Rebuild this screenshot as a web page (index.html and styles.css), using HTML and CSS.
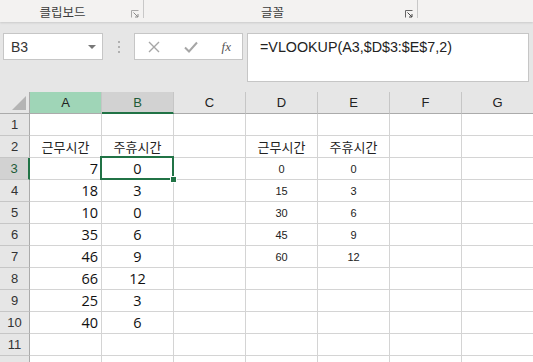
FILE: index.html
```html
<!DOCTYPE html>
<html lang="ko">
<head>
<meta charset="utf-8">
<link rel="stylesheet" href="styles.css">
</head>
<body>
<div class="ribbon">
  <div class="group g1"><span class="glabel">클립보드</span><svg class="launch" width="8" height="8" viewBox="0 0 8 8"><path d="M0.5 7.5V0.5H7.5" fill="none" stroke="#a8a8a8"/><path d="M2.5 2.5L7 7M7 4V7H4" fill="none" stroke="#8a8a8a"/></svg></div>
  <div class="group g2"><span class="glabel">글꼴</span><svg class="launch" width="8" height="8" viewBox="0 0 8 8"><path d="M0.5 7.5V0.5H7.5" fill="none" stroke="#666"/><path d="M2.5 2.5L7 7M7 4V7H4" fill="none" stroke="#444"/></svg></div>
  <div class="group g3"></div>
</div>
<div class="fbar">
  <div class="namebox"><span>B3</span><span class="caret"></span></div>
  <div class="dots"><i></i><i></i><i></i></div>
  <div class="btns">
    <svg width="14" height="14" viewBox="0 0 14 14"><path d="M2 2L12 12M12 2L2 12" stroke="#a6a6a6" stroke-width="1.4"/></svg>
    <svg width="16" height="14" viewBox="0 0 16 14"><path d="M2 7.5L6 11.5L14 2.5" fill="none" stroke="#a6a6a6" stroke-width="2"/></svg>
    <span class="fx">fx</span>
  </div>
  <div class="formula">=VLOOKUP(A3,$D$3:$E$7,2)</div>
</div>
<div class="sheet">
  <div class="corner"><span class="tri"></span></div>
  <div class="ch hl">A</div><div class="ch sel">B</div><div class="ch">C</div><div class="ch">D</div><div class="ch">E</div><div class="ch">F</div><div class="ch">G</div>

  <div class="rh">1</div><div class="c"></div><div class="c"></div><div class="c"></div><div class="c"></div><div class="c"></div><div class="c"></div><div class="c"></div>

  <div class="rh">2</div><div class="c k">근무시간</div><div class="c k">주휴시간</div><div class="c"></div><div class="c k">근무시간</div><div class="c k">주휴시간</div><div class="c"></div><div class="c"></div>

  <div class="rh rsel">3</div><div class="c n">7</div><div class="c m active">0<span class="box"></span><span class="handle"></span></div><div class="c"></div><div class="c s">0</div><div class="c s">0</div><div class="c"></div><div class="c"></div>

  <div class="rh">4</div><div class="c n">18</div><div class="c m">3</div><div class="c"></div><div class="c s">15</div><div class="c s">3</div><div class="c"></div><div class="c"></div>

  <div class="rh">5</div><div class="c n">10</div><div class="c m">0</div><div class="c"></div><div class="c s">30</div><div class="c s">6</div><div class="c"></div><div class="c"></div>

  <div class="rh">6</div><div class="c n">35</div><div class="c m">6</div><div class="c"></div><div class="c s">45</div><div class="c s">9</div><div class="c"></div><div class="c"></div>

  <div class="rh">7</div><div class="c n">46</div><div class="c m">9</div><div class="c"></div><div class="c s">60</div><div class="c s">12</div><div class="c"></div><div class="c"></div>

  <div class="rh">8</div><div class="c n">66</div><div class="c m">12</div><div class="c"></div><div class="c"></div><div class="c"></div><div class="c"></div><div class="c"></div>

  <div class="rh">9</div><div class="c n">25</div><div class="c m">3</div><div class="c"></div><div class="c"></div><div class="c"></div><div class="c"></div><div class="c"></div>

  <div class="rh">10</div><div class="c n">40</div><div class="c m">6</div><div class="c"></div><div class="c"></div><div class="c"></div><div class="c"></div><div class="c"></div>

  <div class="rh">11</div><div class="c"></div><div class="c"></div><div class="c"></div><div class="c"></div><div class="c"></div><div class="c"></div><div class="c"></div>

  <div class="rh"></div><div class="c"></div><div class="c"></div><div class="c"></div><div class="c"></div><div class="c"></div><div class="c"></div><div class="c"></div>
</div>
</body>
</html>
```
FILE: styles.css
```css
html, body {
  margin: 0;
  padding: 0;
}
body {
  width: 533px;
  height: 362px;
  overflow: hidden;
  background: #e6e6e6;
  font-family: "Liberation Sans", "Noto Sans CJK KR", sans-serif;
  color: #222;
}
.ribbon {
  height: 22px;
  background: #f3f2f1;
  display: flex;
  box-shadow: 0 1px 2px rgba(0,0,0,0.12);
  position: relative;
}
.group {
  position: relative;
  display: flex;
  align-items: flex-end;
  height: 18px;
  border-right: 1px solid #c8c8c8;
}
.g1 { width: 143px; }
.g2 { width: 273px; }
.g3 { border-right: none; flex: 1; }
.glabel {
  flex: 1;
  text-align: center;
  font-family: "Noto Sans CJK KR", sans-serif;
  font-size: 12.5px;
  line-height: 14px;
  color: #3c3c3c;
  padding-right: 16px;
  margin-bottom: -1px;
}
.g1 .glabel { padding-right: 18px; }
.launch {
  position: absolute;
  right: 4px;
  top: 10px;
}
.fbar {
  display: flex;
  align-items: flex-start;
  padding: 11px 4px 0 3px;
  height: 49px;
}
.namebox {
  background: #fff;
  border: 1px solid #c6c6c6;
  display: flex;
  align-items: center;
  justify-content: space-between;
  padding: 0 6px 0 7px;
  font-size: 14px;
  color: #333;
  box-sizing: border-box;
  width: 100px;
  height: 27px;
}
.caret {
  width: 0;
  height: 0;
  border-left: 4px solid transparent;
  border-right: 4px solid transparent;
  border-top: 4px solid #777;
}
.dots {
  width: 31px;
  height: 27px;
  display: flex;
  flex-direction: column;
  align-items: center;
  justify-content: center;
  gap: 3px;
}
.dots i {
  width: 2px;
  height: 2px;
  background: #b0b0b0;
}
.btns {
  width: 109px;
  height: 27px;
  box-sizing: border-box;
  background: #fff;
  border: 1px solid #c6c6c6;
  display: flex;
  align-items: center;
  justify-content: space-between;
  padding: 0 11px 0 12px;
}
.fx {
  font-family: "Liberation Serif", serif;
  font-style: italic;
  font-size: 13px;
  color: #555;
}
.formula {
  flex: 1;
  margin-left: 4px;
  height: 49px;
  box-sizing: border-box;
  background: #fff;
  border: 1px solid #c6c6c6;
  padding: 3px 0 0 12px;
  font-size: 14.3px;
  line-height: 20px;
  color: #222;
}
.sheet {
  margin-top: 10px;
  display: grid;
  grid-template-columns: 30px repeat(7, 72px);
  grid-auto-rows: 22px;
  background: #fff;
}
.corner, .ch, .rh {
  background: #e6e6e6;
  box-sizing: border-box;
}
.corner {
  position: relative;
  border-right: 1px solid #ababab;
  border-bottom: 1px solid #ababab;
}
.tri {
  position: absolute;
  right: 3px;
  bottom: 3px;
  width: 0;
  height: 0;
  border-left: 14px solid transparent;
  border-bottom: 14px solid #b4b4b4;
}
.ch {
  border-right: 1px solid #c6c6c6;
  border-bottom: 1px solid #ababab;
  display: flex;
  align-items: center;
  justify-content: center;
  font-size: 13px;
  color: #222;
}
.ch.hl {
  background: #9fd5b7;
}
.ch.sel {
  background: #d2d2d2;
  border-bottom: 2px solid #217346;
  color: #1f5c38;
}
.rh {
  border-right: 1px solid #ababab;
  border-bottom: 1px solid #c6c6c6;
  display: flex;
  align-items: center;
  justify-content: center;
  font-size: 13px;
  color: #333;
}
.rh.rsel {
  background: #d2d2d2;
  border-right: 2px solid #217346;
  color: #1f5c38;
}
.c {
  box-sizing: border-box;
  border-right: 1px solid #d4d4d4;
  border-bottom: 1px solid #d4d4d4;
  display: flex;
  align-items: center;
  justify-content: center;
  font-family: "Open Sans", "Liberation Sans", sans-serif;
  font-size: 14.5px;
  color: #111;
  position: relative;
}
.c.n {
  justify-content: flex-end;
  padding-right: 3px;
}
.c.k {
  font-family: "Noto Sans CJK KR", sans-serif;
  font-size: 13px;
  color: #222;
}
.c.s {
  font-family: "Liberation Sans", sans-serif;
  font-size: 11px;
  color: #222;
}
.box {
  position: absolute;
  left: -2px;
  top: -2px;
  right: -1px;
  bottom: -1px;
  border: 2px solid #217346;
}
.handle {
  position: absolute;
  right: -4px;
  bottom: -4px;
  width: 5px;
  height: 5px;
  background: #217346;
  border: 1px solid #fff;
  z-index: 2;
}
```
